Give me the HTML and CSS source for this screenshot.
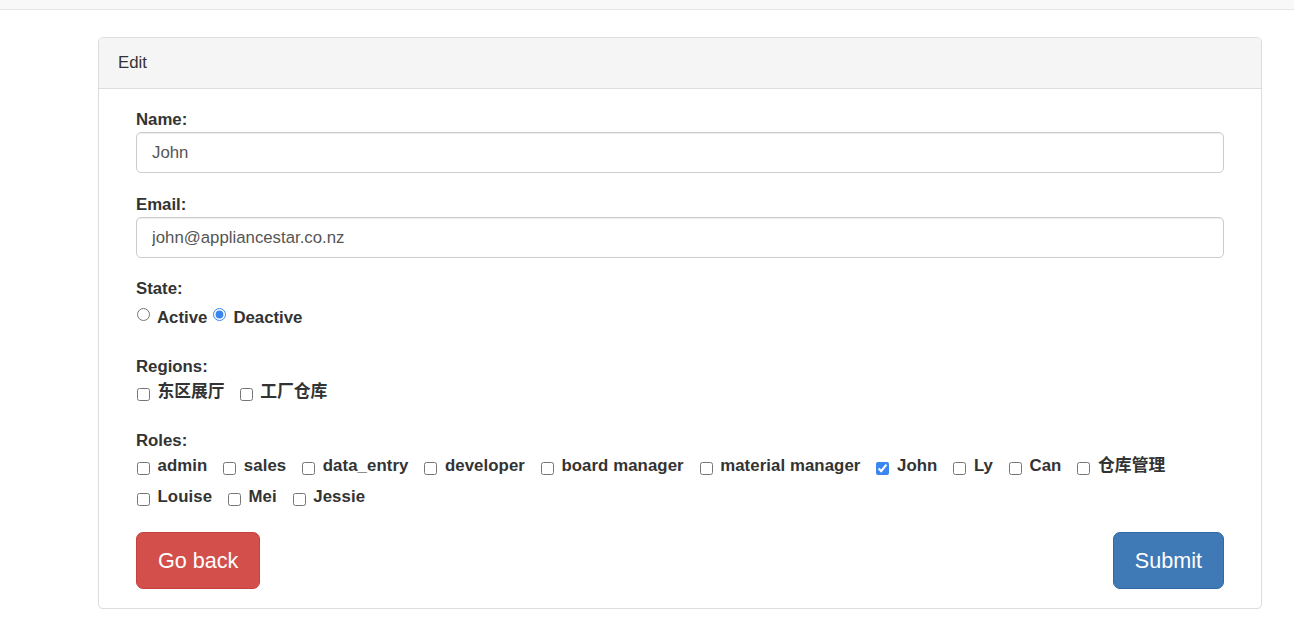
FILE: index.html
```html
<!DOCTYPE html>
<html lang="en">
<head>
<meta charset="utf-8">
<title>Edit</title>
<link rel="stylesheet" href="styles.css">
</head>
<body>
<div class="topbar"></div>
<div class="page">
  <div class="panel">
    <div class="panel-heading">Edit</div>
    <form class="panel-body">
      <div class="group name">
        <label class="lbl">Name:</label>
        <input class="field" type="text" value="John">
      </div>
      <div class="group">
        <label class="lbl">Email:</label>
        <input class="field" type="text" value="john@appliancestar.co.nz">
      </div>
      <div class="group choice state">
        <div class="lbl">State:</div>
        <div class="opts radios">
          <label class="opt"><input type="radio" name="state">Active</label>
          <label class="opt"><input type="radio" name="state" checked>Deactive</label>
        </div>
      </div>
      <div class="group choice regions">
        <div class="lbl">Regions:</div>
        <div class="opts checks">
          <label class="opt"><input type="checkbox">东区展厅</label>
          <label class="opt"><input type="checkbox">工厂仓库</label>
        </div>
      </div>
      <div class="group choice roles">
        <div class="lbl">Roles:</div>
        <div class="opts checks">
          <label class="opt"><input type="checkbox">admin</label>
          <label class="opt"><input type="checkbox">sales</label>
          <label class="opt"><input type="checkbox">data_entry</label>
          <label class="opt"><input type="checkbox">developer</label>
          <label class="opt"><input type="checkbox">board manager</label>
          <label class="opt"><input type="checkbox">material manager</label>
          <label class="opt"><input type="checkbox" checked>John</label>
          <label class="opt"><input type="checkbox">Ly</label>
          <label class="opt"><input type="checkbox">Can</label>
          <label class="opt"><input type="checkbox">仓库管理</label>
          <label class="opt"><input type="checkbox">Louise</label>
          <label class="opt"><input type="checkbox">Mei</label>
          <label class="opt"><input type="checkbox">Jessie</label>
        </div>
      </div>
      <div class="actions">
        <button type="button" class="btn btn-danger">Go back</button>
        <button type="button" class="btn btn-primary">Submit</button>
      </div>
    </form>
  </div>
</div>
</body>
</html>
```
FILE: styles.css
```css
* { box-sizing: border-box; }
html, body {
  margin: 0;
  background: #fff;
}
body {
  font-family: "Liberation Sans", Arial, "Noto Sans CJK SC", sans-serif;
  font-size: 16.8px;
  line-height: 20px;
  color: #333;
}
.topbar {
  height: 10px;
  background: #f8f8f8;
  border-bottom: 1px solid #e7e7e7;
}
.page {
  padding: 27px 32px 0 98px;
}
.panel {
  border: 1px solid #ddd;
  border-radius: 5px;
  background: #fff;
  box-shadow: 0 1px 1px rgba(0,0,0,0.04);
}
.panel-heading {
  background: #f5f5f5;
  border-bottom: 1px solid #ddd;
  border-radius: 4px 4px 0 0;
  padding: 15px 19px;
  line-height: 20px;
  color: #333;
}
.panel-body {
  margin: 0;
  padding: 21px 37px 19px;
}
.group {
  margin-bottom: 21px;
}
.group.name {
  margin-bottom: 22px;
}
.lbl {
  display: block;
  font-weight: bold;
  margin-bottom: 2px;
  line-height: 20px;
}
.field {
  display: block;
  width: 100%;
  height: 41px;
  padding: 0 15px;
  border: 1px solid #ccc;
  border-radius: 5px;
  font-family: inherit;
  font-size: 16.8px;
  color: #555;
  background: #fff;
  box-shadow: inset 0 1px 1px rgba(0,0,0,0.075);
  outline: none;
}
.choice .lbl { margin-bottom: 0; }
.state { margin-bottom: 29px; }
.regions { margin-bottom: 29px; }
.roles { margin-bottom: 25px; }
.opts {
  display: flex;
  flex-wrap: wrap;
  font-weight: bold;
  line-height: 20px;
  accent-color: #3a85f0;
}
.state .opts { margin-top: 9px; column-gap: 5px; }
.regions .opts { margin-top: 5px; column-gap: 14px; }
.roles .opts {
  margin-top: 5px;
  column-gap: 15px;
  row-gap: 11px;
  letter-spacing: 0.08px;
}
.opt {
  display: block;
  white-space: nowrap;
}
.opt input {
  margin: 0 7px 0 1px;
  width: 13px;
  height: 13px;
}
.opt input[type="radio"] {
  vertical-align: 2px;
}
.opt input[type="checkbox"] {
  margin-right: 7.5px;
  vertical-align: -4px;
}
.actions {
  display: flex;
  justify-content: space-between;
}
.btn {
  height: 57px;
  padding: 0 21px;
  border: 1px solid transparent;
  border-radius: 7px;
  font-family: inherit;
  font-size: 21.6px;
  color: #fff;
  cursor: pointer;
}
.btn-danger {
  background: #d24f4c;
  border-color: #c9413d;
}
.btn-primary {
  background: #3f79b6;
  border-color: #3069a3;
}
```
